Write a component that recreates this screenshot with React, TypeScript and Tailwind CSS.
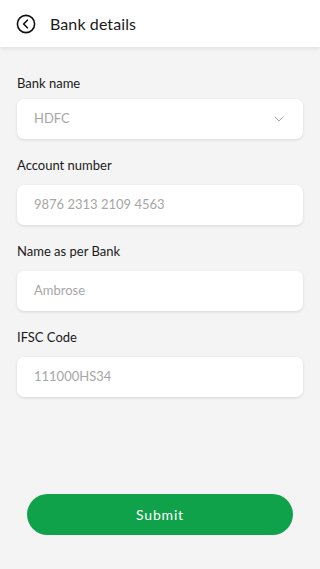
import { ChevronDown } from "lucide-react";

const fields = [
  { label: "Account number", value: "9876 2313 2109 4563" },
  { label: "Name as per Bank", value: "Ambrose" },
  { label: "IFSC Code", value: "111000HS34" },
];

function BackIcon() {
  return (
    <svg width="20" height="20" viewBox="0 0 20 20" fill="none">
      <circle cx="10" cy="10" r="8.6" stroke="#111" strokeWidth="1.6" />
      <path d="M11.4 6.2 L7.6 10 L11.4 13.8" stroke="#111" strokeWidth="1.6" strokeLinecap="round" strokeLinejoin="round" />
    </svg>
  );
}

export default function App() {
  return (
    <div
      className="min-h-screen flex flex-col bg-[#f4f4f4] text-[#1a1a1a]"
      style={{ fontFamily: "Lato, 'Noto Sans', sans-serif" }}
    >
      {/* Header */}
      <div className="h-[47px] bg-white flex items-center pl-4 gap-[14px] shadow-[0_2px_4px_rgba(0,0,0,0.08)]">
        <BackIcon />
        <span className="text-[16px] tracking-[0.1px]">Bank details</span>
      </div>

      {/* Form */}
      <div className="px-[17px] pt-[26px] flex flex-col">
        <div className="flex flex-col">
          <label className="text-[13px] leading-[20px]">Bank name</label>
          <div className="mt-[6px] h-[40px] bg-white rounded-[7px] shadow-[0_1px_3px_rgba(0,0,0,0.12)] flex items-center justify-between pl-[17px] pr-[16px]">
            <span className="text-[13px] text-[#a6a6a6]">HDFC</span>
            <ChevronDown size={16} strokeWidth={1.3} color="#9a9a9a" />
          </div>
        </div>
        {fields.map((f) => (
          <div key={f.label} className="flex flex-col mt-[16px]">
            <label className="text-[13px] leading-[20px]">{f.label}</label>
            <div className="mt-[10px] h-[40px] bg-white rounded-[7px] shadow-[0_1px_3px_rgba(0,0,0,0.12)] flex items-center pl-[17px]">
              <span className="text-[13px] text-[#a6a6a6]">{f.value}</span>
            </div>
          </div>
        ))}
      </div>

      <div className="mt-auto px-[27px] pb-[34px]">
        <button className="w-full h-[41px] rounded-full bg-[#0fa24a] text-white text-[14px] tracking-[0.8px]">
          Submit
        </button>
      </div>
    </div>
  );
}
